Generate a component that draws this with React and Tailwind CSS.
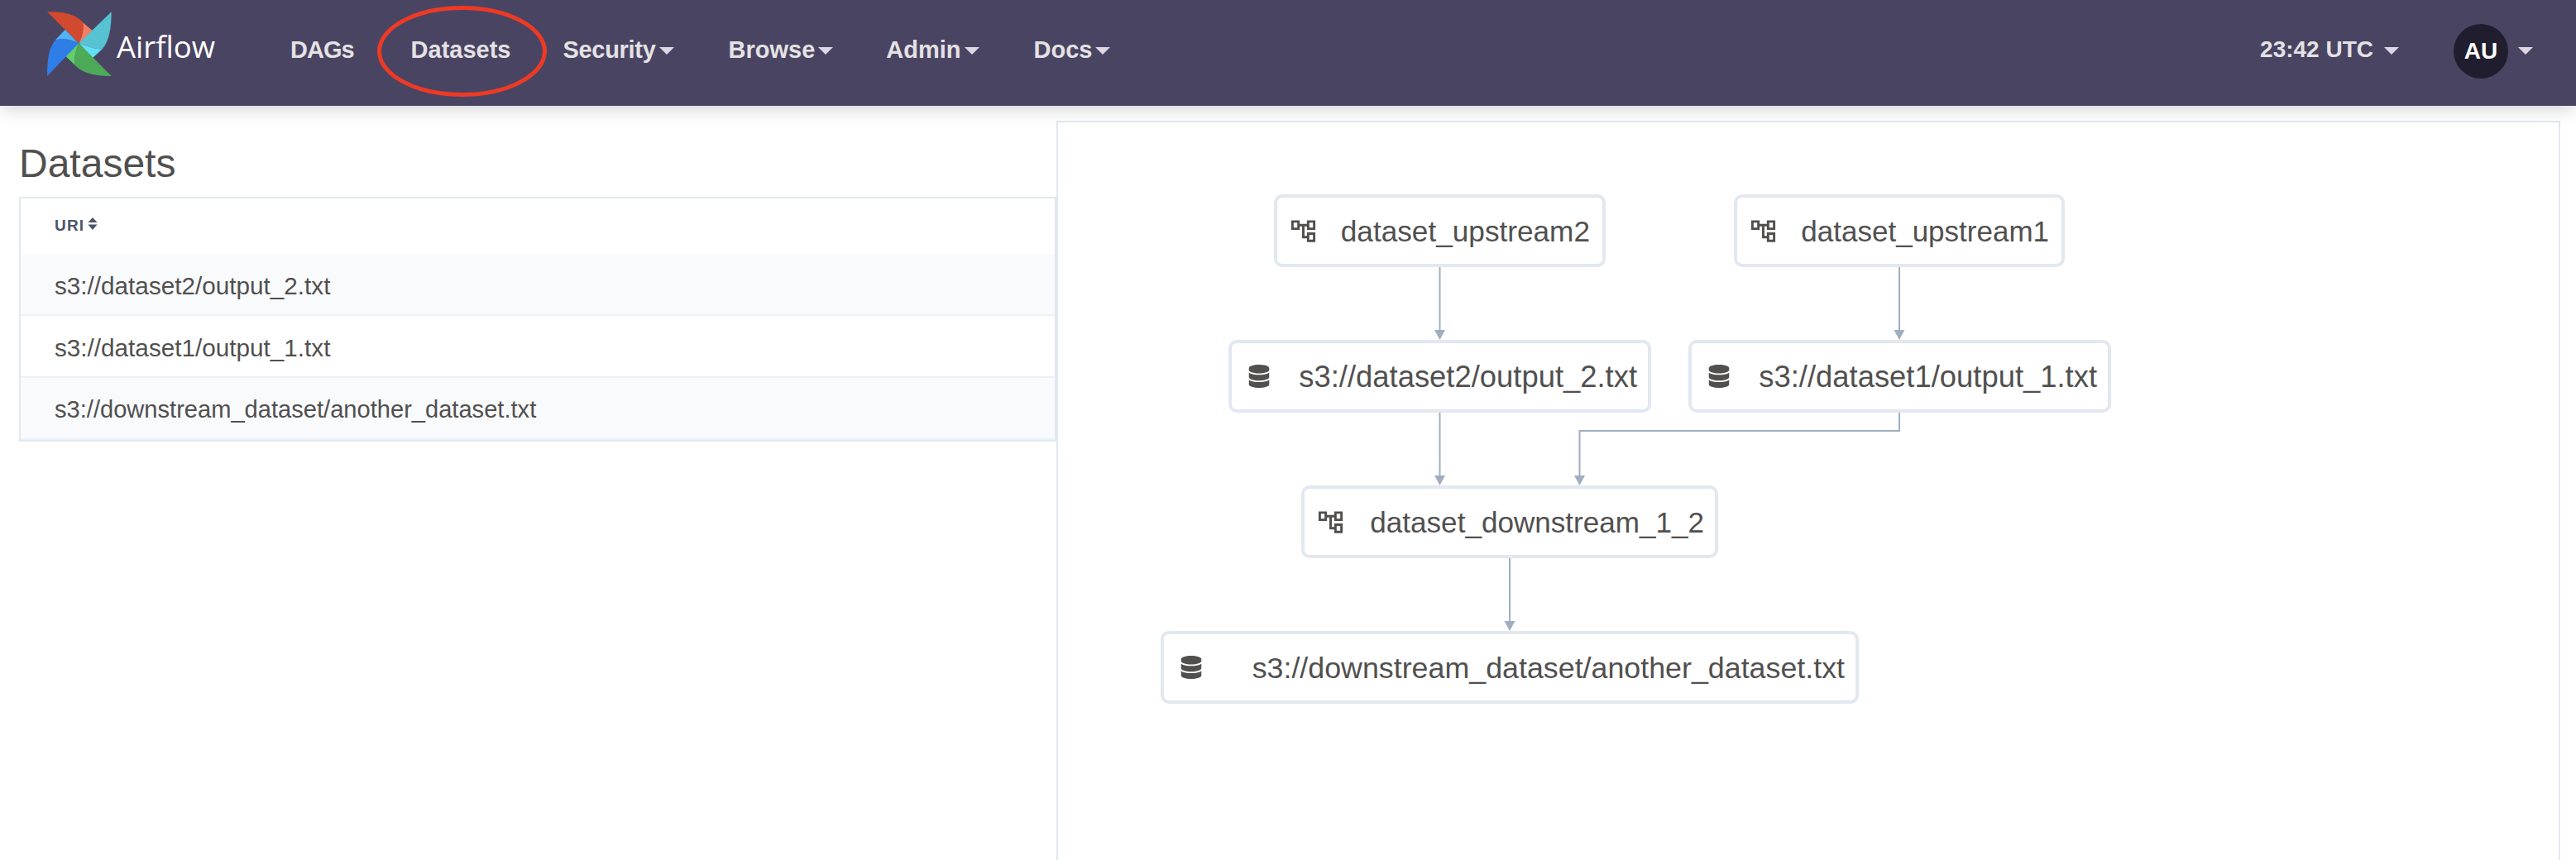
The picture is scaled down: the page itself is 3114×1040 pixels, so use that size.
import React from "react";
import { MdOutlineAccountTree } from "react-icons/md";
import { FaDatabase } from "react-icons/fa";

const Caret = () => (
  <span className="inline-block w-0 h-0 border-l-[9px] border-r-[9px] border-t-[9px] border-l-transparent border-r-transparent border-t-[#dfd6e4]" />
);

const NavItem = ({ label, caret, cls = "" }) => (
  <div className={`flex items-center gap-[4px] font-bold text-[29px] leading-[32px] text-[#e4e2e4] ${cls}`}>
    <span>{label}</span>
    {caret && <span className="flex mt-[2px]"><Caret /></span>}
  </div>
);

const Logo = () => (
  <svg viewBox="50 42 234 234" className="w-[78px] h-[78px] block shrink-0">
    <path d="M50 43C90 43 150 45 180 82C185 110 175 140 165 157Z" fill="#d14a2f" />
    <path d="M180 82L215 112C200 130 180 150 165 157C175 140 185 110 180 82Z" fill="#f37f5f" />
    <path d="M283 43C283 100 275 150 250 178C220 180 190 165 165 157Z" fill="#56c2d2" />
    <path d="M250 178L215 210C195 195 180 170 165 157C190 165 220 180 250 178Z" fill="#62dff2" />
    <path d="M283 276C240 276 180 270 152 237C145 210 155 180 165 157Z" fill="#4daa58" />
    <path d="M152 237L118 205C130 185 150 165 165 157C155 180 145 210 152 237Z" fill="#62cf6c" />
    <path d="M50 276L165 157C140 145 110 135 80 145C55 175 50 220 50 276Z" fill="#2f7ee8" />
    <path d="M80 145L115 108C135 125 150 145 165 157C140 145 110 135 80 145Z" fill="#4fb3f6" />
  </svg>
);

const rows = [
  { text: "s3://dataset2/output_2.txt", size: "text-[29.7px]" },
  { text: "s3://dataset1/output_1.txt", size: "text-[29.7px]" },
  { text: "s3://downstream_dataset/another_dataset.txt", size: "text-[29.1px]" },
];

const Node = ({ cls, kind, label, size }) => (
  <div className={`absolute h-[88px] bg-white border-[4px] border-[#e2e8f0] rounded-[10px] flex items-center justify-between ${cls}`}>
    {kind === "dag" ? (
      <MdOutlineAccountTree className="text-[35px] text-[#51504f] shrink-0" />
    ) : (
      <FaDatabase className="text-[28px] text-[#51504f] shrink-0" />
    )}
    <span className={`pt-[2px] leading-[40px] text-[#51504f] whitespace-nowrap ${size}`}>{label}</span>
  </div>
);

const V = "#a0aec0";
const Arrow = ({ x, y }) => <path d={`M${x - 6.5} ${y - 12}H${x + 6.5}L${x} ${y}Z`} fill={V} />;

export default function App() {
  return (
    <div className="w-[3114px] h-[1040px] overflow-hidden bg-white font-['Liberation_Sans',Arial,sans-serif]">
      <header className="relative z-10 h-[128px] bg-[#4a4463] flex items-center pb-[8px] pl-[57px] pr-[52px] shadow-[0_2px_22px_rgba(0,0,0,0.2)]">
        <div className="flex items-start w-[294px] self-start mt-[14px] shrink-0">
          <Logo />
          <span className="ml-[6px] mt-[18px] text-[36.5px] leading-[48px] text-white font-['Open_Sans',sans-serif]">Airflow</span>
        </div>
        <nav className="flex items-center gap-[64px]">
          <NavItem label="DAGs" cls="tracking-[-1px]" />
          <NavItem label="Datasets" cls="ml-[5px]" />
          <NavItem label="Security" caret cls="-ml-[1px] tracking-[-0.3px]" />
          <NavItem label="Browse" caret cls="ml-[2px]" />
          <NavItem label="Admin" caret />
          <NavItem label="Docs" caret cls="ml-[2px]" />
        </nav>
        <div className="ml-auto flex items-center">
          <span className="font-bold text-[28px] leading-[32px] text-[#e4e2e4]">23:42 UTC</span>
          <span className="flex ml-[13px] mt-[2px]"><Caret /></span>
          <div className="ml-[66px] mt-[4px] w-[66px] h-[66px] rounded-full bg-[#1f1d2e] flex items-center justify-center text-white font-bold text-[28px]">AU</div>
          <span className="flex ml-[12px] mt-[2px]"><Caret /></span>
        </div>
        <svg className="absolute left-[454px] top-[5px] w-[209px] h-[114px]" viewBox="0 0 209 114">
          <ellipse cx="104.5" cy="57" rx="100" ry="52.5" fill="none" stroke="#ee3a24" strokeWidth="5" />
        </svg>
      </header>

      <main className="flex h-[912px]">
        <section className="w-[1277px] shrink-0 pl-[23px]">
          <h1 className="pt-[46px] mb-[16px] text-[48px] leading-[48px] font-normal text-[#51504f]">Datasets</h1>
          <div className="border-2 border-[#e2e8f0] text-[#51504f]">
            <div className="h-[67px] pl-[41px] flex items-center">
              <span className="font-bold text-[19px] tracking-[1.2px] text-[#4a5568]">URI</span>
              <svg viewBox="0 0 12 16" className="ml-[4px] mb-[6px] w-[12px] h-[15px]">
                <path d="M6 0L12 6.5H0Z M0 9H12L6 16Z" fill="#4a5568" />
              </svg>
            </div>
            {rows.map((r, i) => (
              <div
                key={r.text}
                className={`h-[75px] pl-[41px] pt-[5px] flex items-center border-b-2 border-[#edf2f7] ${r.size} ${i % 2 === 0 ? "bg-[#f9fafc]" : "bg-white"}`}
              >
                {r.text}
              </div>
            ))}
          </div>
        </section>

        <section className="relative flex-1 mt-[18px] mr-[19px] border-t-2 border-x-2 border-[#e2e8f0]">
          <svg className="absolute inset-0 w-full h-full" fill="none">
            <g stroke={V} strokeWidth="2">
              <path d="M461.5 175V252" />
              <path d="M1017 175V252" />
              <path d="M461.5 351V428" />
              <path d="M1017 351V373H630.5V428" />
              <path d="M546 527V604" />
            </g>
            <Arrow x={461.5} y={263} />
            <Arrow x={1017} y={263} />
            <Arrow x={461.5} y={439} />
            <Arrow x={630.5} y={439} />
            <Arrow x={546} y={615} />
          </svg>
          <Node cls="left-[261px] top-[87px] w-[401px] pl-[14px] pr-[15px]" kind="dag" size="text-[35.2px]" label="dataset_upstream2" />
          <Node cls="left-[206px] top-[263px] w-[511px] pl-[19px] pr-[13px]" kind="db" size="text-[36.4px]" label="s3://dataset2/output_2.txt" />
          <Node cls="left-[817px] top-[87px] w-[400px] pl-[14px] pr-[15px]" kind="dag" size="text-[35px]" label="dataset_upstream1" />
          <Node cls="left-[762px] top-[263px] w-[511px] pl-[19px] pr-[13px]" kind="db" size="text-[36.4px]" label="s3://dataset1/output_1.txt" />
          <Node cls="left-[294px] top-[439px] w-[504px] pl-[14px] pr-[13px]" kind="dag" size="text-[35.1px]" label="dataset_downstream_1_2" />
          <Node cls="left-[124px] top-[615px] w-[844px] pl-[19px] pr-[13px]" kind="db" size="text-[35.8px]" label="s3://downstream_dataset/another_dataset.txt" />
        </section>
      </main>
    </div>
  );
}
